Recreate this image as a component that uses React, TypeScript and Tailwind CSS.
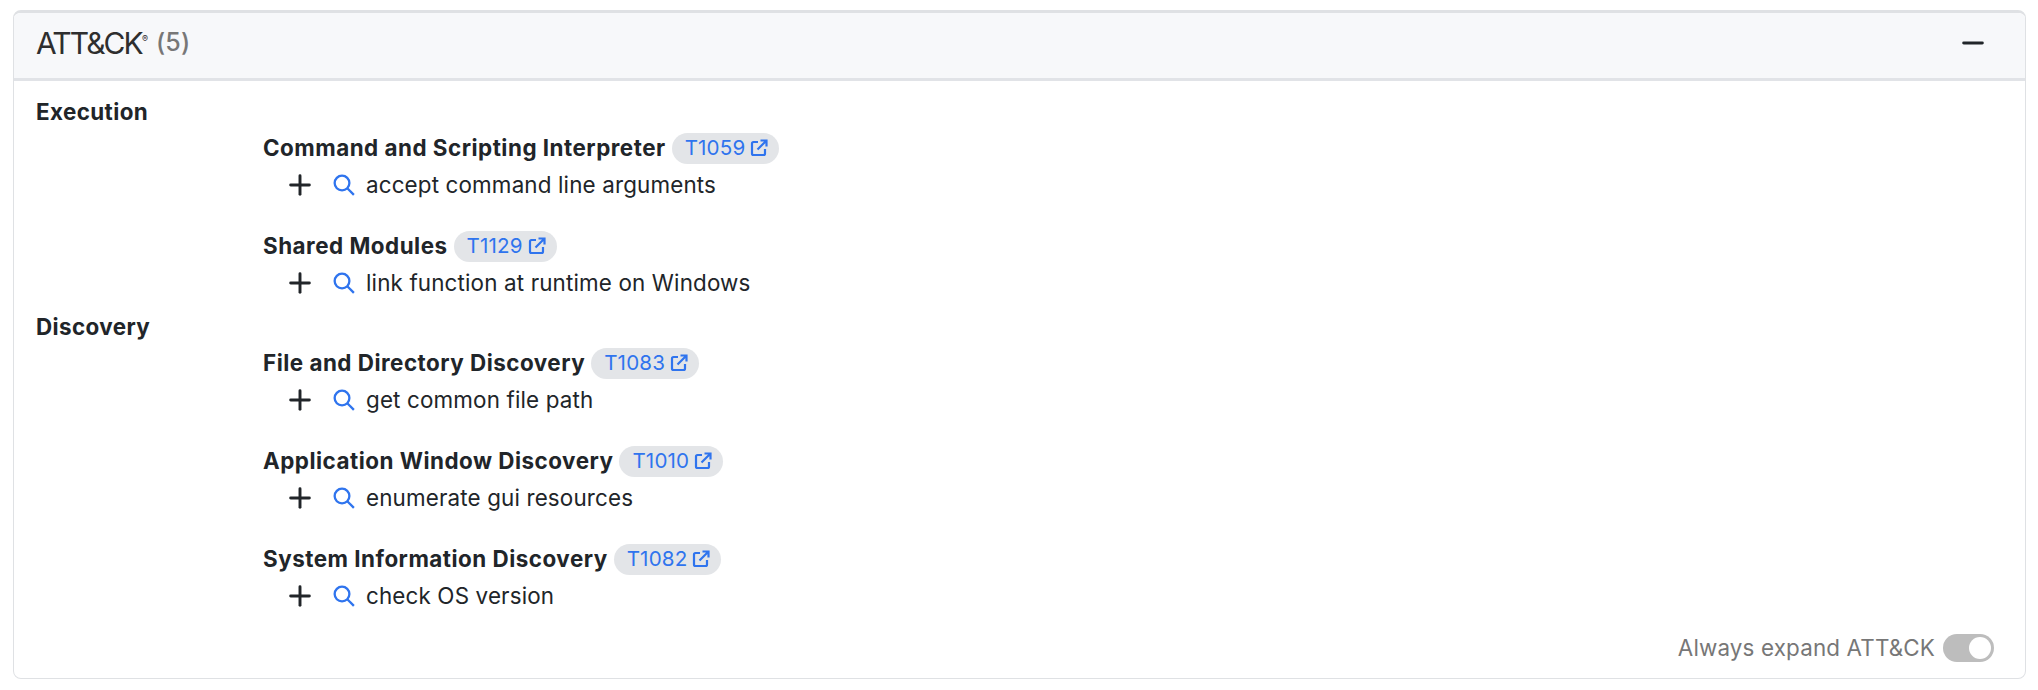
import { Minus, Plus } from 'lucide-react';

interface Technique {
  name: string;
  id: string;
  feature: string;
}

interface Tactic {
  name: string;
  techniques: Technique[];
}

const tactics: Tactic[] = [
  {
    name: 'Execution',
    techniques: [
      { name: 'Command and Scripting Interpreter', id: 'T1059', feature: 'accept command line arguments' },
      { name: 'Shared Modules', id: 'T1129', feature: 'link function at runtime on Windows' },
    ],
  },
  {
    name: 'Discovery',
    techniques: [
      { name: 'File and Directory Discovery', id: 'T1083', feature: 'get common file path' },
      { name: 'Application Window Discovery', id: 'T1010', feature: 'enumerate gui resources' },
      { name: 'System Information Discovery', id: 'T1082', feature: 'check OS version' },
    ],
  },
];

function LinkIcon() {
  return (
    <svg viewBox="0 0 18 18" className="ml-[5px] w-[18px] h-[18px]" fill="none" stroke="currentColor" strokeWidth="2.200">
      <path d="M8 3H3.500A1.500 1.500 0 0 0 2 4.500V14.500A1.500 1.500 0 0 0 3.500 16H13.500A1.500 1.500 0 0 0 15 14.500V10" />
      <path d="M7.500 10.500L16 2M10.500 1.500H16.500V7.500" />
    </svg>
  );
}

function SearchIcon() {
  return (
    <svg viewBox="0 0 20 20" className="ml-[17px] w-[22px] h-[22px] text-[#2f74ee]" fill="none" stroke="currentColor" strokeWidth="2.100">
      <circle cx="8.200" cy="8.200" r="6.700" />
      <path d="M13 13L19 19" />
    </svg>
  );
}

function TechniqueRow({ technique }: { technique: Technique }) {
  return (
    <div className="pl-[227px] mb-[26px] last:mb-0">
      <div className="flex items-center h-[36px] -mt-[1px] mb-[1px]">
        <span className="font-bold text-[#212529] tracking-[0.5px]">{technique.name}</span>
        <span className="ml-[6px] flex items-center h-[31px] pl-[13px] pr-[11px] rounded-full bg-[#e3e5e8] text-[20.6px] text-[#2f74ee]">
          {technique.id}
          <LinkIcon />
        </span>
      </div>
      <div className="flex items-center h-[36px] text-[#212529]">
        <Plus className="ml-[21px] w-[32px] h-[32px]" strokeWidth={2.2} />
        <SearchIcon />
        <span className="ml-[11px]">{technique.feature}</span>
      </div>
    </div>
  );
}

export default function App() {
  return (
    <div className="w-[2038px] h-[690px] bg-white pt-[10px] pl-[13px] pr-[12px] font-['Inter',sans-serif] text-[22.4px] tracking-[0.15px]">
      <div className="h-[669px] flex flex-col border border-[#dfe1e4] border-t-[3px] rounded-[8px] overflow-hidden">
        <div className="flex items-center justify-between h-[68px] pl-[22px] pr-[24px] pb-[5px] bg-[#f7f8fa] border-b-[3px] border-[#e1e3e7] shrink-0">
          <div className="flex items-center">
            <span className="text-[30px] tracking-[-1.9px] text-[#2e2e2e] font-normal">
              ATT&amp;CK
              <sup className="text-[9px] tracking-normal -top-[12px]">®</sup>
            </span>
            <span className="ml-[8px] text-[25px] font-medium text-[#777]">(5)</span>
          </div>
          <Minus className="mr-[12px] w-[32px] h-[32px] text-[#212529]" strokeWidth={2.2} />
        </div>
        <div className="flex-1 flex flex-col pl-[22px] pr-[24px] pt-[14px]">
          {tactics.map((tactic) => (
            <div key={tactic.name} className="mb-[9px]">
              <div className="h-[36px] flex items-center font-bold text-[#212529] tracking-[0.4px] -mt-[1px] mb-[1px]">{tactic.name}</div>
              {tactic.techniques.map((technique) => (
                <TechniqueRow key={technique.id} technique={technique} />
              ))}
            </div>
          ))}
          <div className="mt-auto mb-[13px] pr-[7px] flex items-center justify-end text-[#777]">
            <span>Always expand ATT&amp;CK</span>
            <span className="ml-[8px] flex items-center justify-end w-[51px] h-[28px] rounded-full bg-[#bdbdbd] pr-[3px]">
              <span className="w-[22px] h-[22px] rounded-full bg-white" />
            </span>
          </div>
        </div>
      </div>
    </div>
  );
}
